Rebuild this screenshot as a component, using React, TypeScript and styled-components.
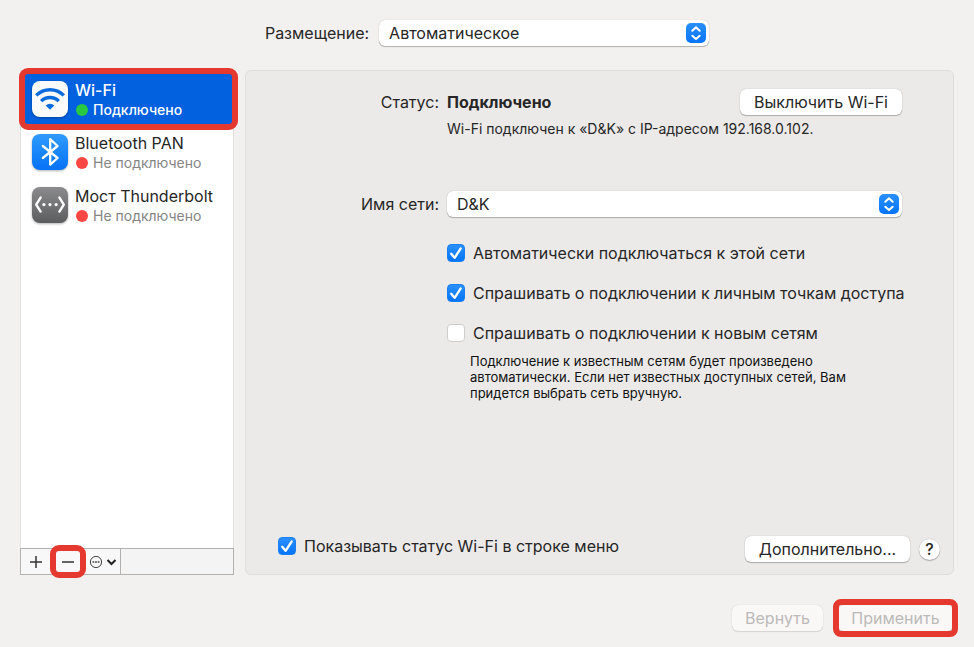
import React, { useId, useState } from "react";
import styled, { createGlobalStyle, css } from "styled-components";

const GlobalStyle = createGlobalStyle`
  *, *::before, *::after { box-sizing: border-box; }
  body {
    margin: 0;
    background: #f3f1f0;
    color: #262626;
    font: 16px/20px Inter, "Liberation Sans", sans-serif;
  }
  button, select, input { font: inherit; color: inherit; }
`;

const Window = styled.div`
  display: flex;
  flex-direction: column;
  min-height: 100vh;
  padding: 20px 20px 16px;
`;

const LocationBar = styled.header`
  display: flex;
  justify-content: center;
  align-items: center;
  gap: 10px;
  margin-bottom: 24px;
`;

const Main = styled.main`
  flex: 1;
  display: grid;
  grid-template-columns: 214px minmax(0, 1fr);
  gap: 11px;
`;

const controlSurface = css`
  height: 26px;
  border: 0;
  border-radius: 6px;
  background: #fff;
  box-shadow: 0 0 1px rgba(0, 0, 0, 0.3), 0 1px 1px rgba(0, 0, 0, 0.25);
`;

const PopUpFrame = styled.div<{ $width?: string }>`
  position: relative;
  display: flex;
  width: ${(p) => p.$width ?? "100%"};
`;

const PopUpSelect = styled.select`
  ${controlSurface}
  appearance: none;
  width: 100%;
  padding: 0 32px 0 10px;
`;

const PopUpArrows = styled.svg`
  position: absolute;
  top: 3px;
  right: 3px;
  width: 20px;
  height: 20px;
  border-radius: 5px;
  background: linear-gradient(#2b90ff, #0674fb);
  pointer-events: none;
`;

const PushButton = styled.button<{ $minWidth: number }>`
  ${controlSurface}
  min-width: ${(p) => p.$minWidth}px;
  padding: 0 12px;
  white-space: nowrap;
  &:disabled {
    color: #bcbab9;
    background: #f9f8f7;
    box-shadow: 0 0 1px rgba(0, 0, 0, 0.2), 0 1px 1px rgba(0, 0, 0, 0.1);
  }
`;

const HelpButton = styled.button`
  width: 21px;
  height: 21px;
  padding: 0;
  border: 0;
  border-radius: 50%;
  background: #fff;
  font-size: 16px;
  font-weight: 500;
  box-shadow: 0 0 1px rgba(0, 0, 0, 0.3), 0 1px 1px rgba(0, 0, 0, 0.25);
`;

const Highlighted = styled.div`
  position: relative;
  display: flex;
`;

const Highlight = styled.span<{ $inset: string; $radius: number }>`
  position: absolute;
  inset: ${(p) => p.$inset};
  z-index: 1;
  border: 6px solid #e5382e;
  border-radius: ${(p) => p.$radius}px;
  pointer-events: none;
`;

const Sidebar = styled.nav`
  display: flex;
  flex-direction: column;
`;

const ServiceList = styled.ul`
  flex: 1;
  margin: 0;
  padding: 1px 0 0;
  list-style: none;
  background: #fff;
  border: 1px solid #e2e0df;
  border-bottom: 0;
`;

const ServiceItem = styled.li`
  position: relative;
`;

const ServiceButton = styled.button<{ $selected: boolean }>`
  display: flex;
  align-items: center;
  gap: 7px;
  width: 100%;
  height: 53px;
  padding: 0 11px;
  border: 0;
  text-align: left;
  background: ${(p) => (p.$selected ? "#0261df" : "transparent")};
  color: ${(p) => (p.$selected ? "#fff" : "#262626")};
`;

const ServiceIcon = styled.svg`
  flex: none;
  width: 36px;
  height: 36px;
  filter: drop-shadow(0 1px 1px rgba(0, 0, 0, 0.3));
`;

const ServiceText = styled.span`
  display: flex;
  flex-direction: column;
  padding-top: 2px;
  white-space: nowrap;
`;

const ServiceName = styled.span<{ $selected: boolean }>`
  font-weight: ${(p) => (p.$selected ? 500 : 400)};
`;

const ServiceStatus = styled.span<{ $selected: boolean }>`
  display: flex;
  align-items: center;
  gap: 5px;
  padding-left: 1px;
  font-size: 14px;
  font-weight: ${(p) => (p.$selected ? 500 : 400)};
  color: ${(p) => (p.$selected ? "#fff" : "#858585")};
`;

const StatusDot = styled.span<{ $on: boolean }>`
  width: 12px;
  height: 12px;
  border-radius: 50%;
  background: ${(p) => (p.$on ? "#28c840" : "#fc4743")};
`;

const ListTools = styled.div`
  display: flex;
  height: 27px;
  border: 1px solid #b2b1b0;
  background: #f5f4f4;
`;

const ToolGroup = styled.div`
  display: flex;
  border-right: 1px solid #b2b1b0;
  background: #f9f8f8;
`;

const ToolButton = styled.button<{ $width: number }>`
  display: flex;
  align-items: center;
  justify-content: center;
  width: ${(p) => p.$width}px;
  padding: 0;
  border: 0;
  background: none;
`;

const Panel = styled.section`
  display: flex;
  flex-direction: column;
  justify-content: space-between;
  padding: 18px 13px 12px 32px;
  border: 1px solid #dfdddc;
  border-radius: 6px;
  background: #ebeae8;
`;

const Form = styled.div`
  display: grid;
  grid-template-columns: 161px minmax(0, 1fr);
  column-gap: 8px;
  padding-right: 38px;
`;

const FieldLabel = styled.label`
  line-height: 26px;
  text-align: right;
  white-space: nowrap;
`;

const StatusField = styled.div`
  min-height: 102px;
`;

const StatusLine = styled.div`
  display: flex;
  justify-content: space-between;
  align-items: center;
`;

const StatusDetail = styled.p`
  margin: 4px 0 0;
  font-size: 14px;
`;

const Options = styled.div`
  grid-column: 2;
  display: flex;
  flex-direction: column;
  gap: 20px;
  padding-top: 26px;
`;

const CheckLabel = styled.label`
  display: flex;
  align-items: center;
  gap: 8px;
  white-space: nowrap;
`;

const CheckFrame = styled.span`
  display: grid;
  width: 18px;
  height: 18px;
  & > * { grid-area: 1 / 1; }
`;

const CheckInput = styled.input`
  appearance: none;
  width: 18px;
  height: 18px;
  margin: 0;
  border: 1px solid #cfcdcc;
  border-radius: 4px;
  background: #fff;
  &:checked {
    border-color: #1c80f5;
    background: linear-gradient(#2b90ff, #0674fb);
  }
  & + svg { visibility: hidden; pointer-events: none; }
  &:checked + svg { visibility: visible; }
`;

const Note = styled.p`
  max-width: 400px;
  margin: -10px 0 0 23px;
  color: #111;
  font-size: 13px;
  line-height: 16px;
`;

const PanelFooter = styled.div`
  display: flex;
  justify-content: space-between;
  align-items: flex-start;
  padding-top: 12px;
`;

const ButtonRow = styled.div<{ $gap: number }>`
  display: flex;
  align-items: center;
  gap: ${(p) => p.$gap}px;
`;

const Footer = styled.footer`
  display: flex;
  justify-content: flex-end;
  gap: 15px;
  margin-top: 30px;
  padding-right: 1px;
`;

function PopUp({ id, options, width }: { id: string; options: string[]; width?: string }) {
  return (
    <PopUpFrame $width={width}>
      <PopUpSelect id={id}>
        {options.map((o) => (
          <option key={o}>{o}</option>
        ))}
      </PopUpSelect>
      <PopUpArrows viewBox="0 0 20 20" fill="none" stroke="#fff" strokeWidth="2" strokeLinecap="round" strokeLinejoin="round" aria-hidden>
        <path d="M6.3 7.7 10 4.3l3.7 3.4M6.3 12.7l3.7 3.4 3.7-3.4" />
      </PopUpArrows>
    </PopUpFrame>
  );
}

function Check({ text, initial = false }: { text: string; initial?: boolean }) {
  const id = useId();
  return (
    <CheckLabel htmlFor={id}>
      <CheckFrame>
        <CheckInput id={id} type="checkbox" defaultChecked={initial} />
        <svg width="18" height="18" viewBox="0 0 18 18" fill="none" stroke="#fff" strokeWidth="2.4" strokeLinecap="round" strokeLinejoin="round" aria-hidden>
          <path d="m4.2 9.8 3.4 4L13.6 4.6" />
        </svg>
      </CheckFrame>
      {text}
    </CheckLabel>
  );
}

function WifiIcon() {
  return (
    <ServiceIcon viewBox="0 0 36 36" aria-hidden>
      <rect width="36" height="36" rx="8" fill="#fafafa" />
      <g fill="none" stroke="#0b6bde" strokeWidth="3.4">
        <path d="M4.2 14.4a19.8 19.8 0 0 1 27.6 0" />
        <path d="M9.2 20.1a12.4 12.4 0 0 1 17.6 0" />
      </g>
      <path d="M18 28.8l-4.3-4.3a6 6 0 0 1 8.6 0z" fill="#0b6bde" />
    </ServiceIcon>
  );
}

function BluetoothIcon() {
  return (
    <ServiceIcon viewBox="0 0 36 36" aria-hidden>
      <defs>
        <linearGradient id="btFill" x2="0" y2="1">
          <stop stopColor="#2f9bff" />
          <stop offset="1" stopColor="#0672f6" />
        </linearGradient>
      </defs>
      <rect width="36" height="36" rx="8" fill="url(#btFill)" />
      <path d="M10.8 12 25.6 24 18.2 30.6V5.2l7.4 6.8-14.8 12" fill="none" stroke="#fff" strokeWidth="2.3" strokeLinejoin="round" strokeLinecap="round" />
    </ServiceIcon>
  );
}

function BridgeIcon() {
  return (
    <ServiceIcon viewBox="0 0 36 36" aria-hidden>
      <defs>
        <linearGradient id="bridgeFill" x2="0" y2="1">
          <stop stopColor="#8b8b8d" />
          <stop offset="1" stopColor="#5c5d5f" />
        </linearGradient>
      </defs>
      <rect width="36" height="36" rx="8" fill="url(#bridgeFill)" />
      <path d="m8.6 10.6-4.4 7 4.4 7M27.4 10.6l4.4 7-4.4 7" fill="none" stroke="#fff" strokeWidth="2.4" strokeLinejoin="round" strokeLinecap="round" />
      <g fill="#fff">
        <circle cx="11.9" cy="17.6" r="1.6" />
        <circle cx="18" cy="17.6" r="1.6" />
        <circle cx="24.1" cy="17.6" r="1.6" />
      </g>
    </ServiceIcon>
  );
}

const services = [
  { name: "Wi-Fi", on: true, Icon: WifiIcon },
  { name: "Bluetooth PAN", on: false, Icon: BluetoothIcon },
  { name: "Мост Thunderbolt", on: false, Icon: BridgeIcon },
];

export default function App() {
  const [selected, setSelected] = useState("Wi-Fi");
  return (
    <Window>
      <GlobalStyle />
      <LocationBar>
        <label htmlFor="location">Размещение:</label>
        <PopUp id="location" options={["Автоматическое"]} width="330px" />
      </LocationBar>

      <Main>
        <Sidebar>
          <ServiceList>
            {services.map(({ name, on, Icon }) => {
              const active = name === selected;
              return (
                <ServiceItem key={name}>
                  <ServiceButton $selected={active} aria-pressed={active} onClick={() => setSelected(name)}>
                    <Icon />
                    <ServiceText>
                      <ServiceName $selected={active}>{name}</ServiceName>
                      <ServiceStatus $selected={active}>
                        <StatusDot $on={on} />
                        {on ? "Подключено" : "Не подключено"}
                      </ServiceStatus>
                    </ServiceText>
                  </ServiceButton>
                  {active && <Highlight $inset="-4px -5px -5px -2px" $radius={9} />}
                </ServiceItem>
              );
            })}
          </ServiceList>
          <ListTools>
            <ToolGroup>
              <ToolButton $width={30} aria-label="Добавить">
                <svg width="14" height="14" viewBox="0 0 14 14" stroke="#333" strokeWidth="1.5" aria-hidden>
                  <path d="M7 1v12M1 7h12" />
                </svg>
              </ToolButton>
              <Highlighted>
                <ToolButton $width={34} aria-label="Удалить">
                  <svg width="14" height="14" viewBox="0 0 14 14" stroke="#333" strokeWidth="1.5" aria-hidden>
                    <path d="M1 7h12" />
                  </svg>
                </ToolButton>
                <Highlight $inset="-4px -1px" $radius={9} />
              </Highlighted>
              <ToolButton $width={35} aria-label="Действия">
                <svg width="29" height="14" viewBox="0 0 29 14" fill="none" stroke="#444" aria-hidden>
                  <circle cx="8" cy="7" r="5.6" />
                  <path d="M4.5 7h7" strokeWidth="1.6" strokeDasharray="1.8 0.8" />
                  <path d="m19.5 5 4 4 4-4" stroke="#222" strokeWidth="2" />
                </svg>
              </ToolButton>
            </ToolGroup>
          </ListTools>
        </Sidebar>

        <Panel>
          <Form>
            <FieldLabel as="span">Статус:</FieldLabel>
            <StatusField>
              <StatusLine>
                <strong>Подключено</strong>
                <PushButton $minWidth={162}>Выключить Wi-Fi</PushButton>
              </StatusLine>
              <StatusDetail>Wi-Fi подключен к «D&amp;K» с IP-адресом 192.168.0.102.</StatusDetail>
            </StatusField>
            <FieldLabel htmlFor="network">Имя сети:</FieldLabel>
            <PopUp id="network" options={["D&K"]} />
            <Options>
              <Check text="Автоматически подключаться к этой сети" initial />
              <Check text="Спрашивать о подключении к личным точкам доступа" initial />
              <Check text="Спрашивать о подключении к новым сетям" />
              <Note>
                Подключение к известным сетям будет произведено автоматически. Если нет известных доступных сетей, Вам
                придется выбрать сеть вручную.
              </Note>
            </Options>
          </Form>
          <PanelFooter>
            <Check text="Показывать статус Wi-Fi в строке меню" initial />
            <ButtonRow $gap={9}>
              <PushButton $minWidth={165}>Дополнительно...</PushButton>
              <HelpButton aria-label="Справка">?</HelpButton>
            </ButtonRow>
          </PanelFooter>
        </Panel>
      </Main>

      <Footer>
        <PushButton $minWidth={91} disabled>Вернуть</PushButton>
        <Highlighted>
          <PushButton $minWidth={115} disabled>Применить</PushButton>
          <Highlight $inset="-6px -5px" $radius={8} />
        </Highlighted>
      </Footer>
    </Window>
  );
}
